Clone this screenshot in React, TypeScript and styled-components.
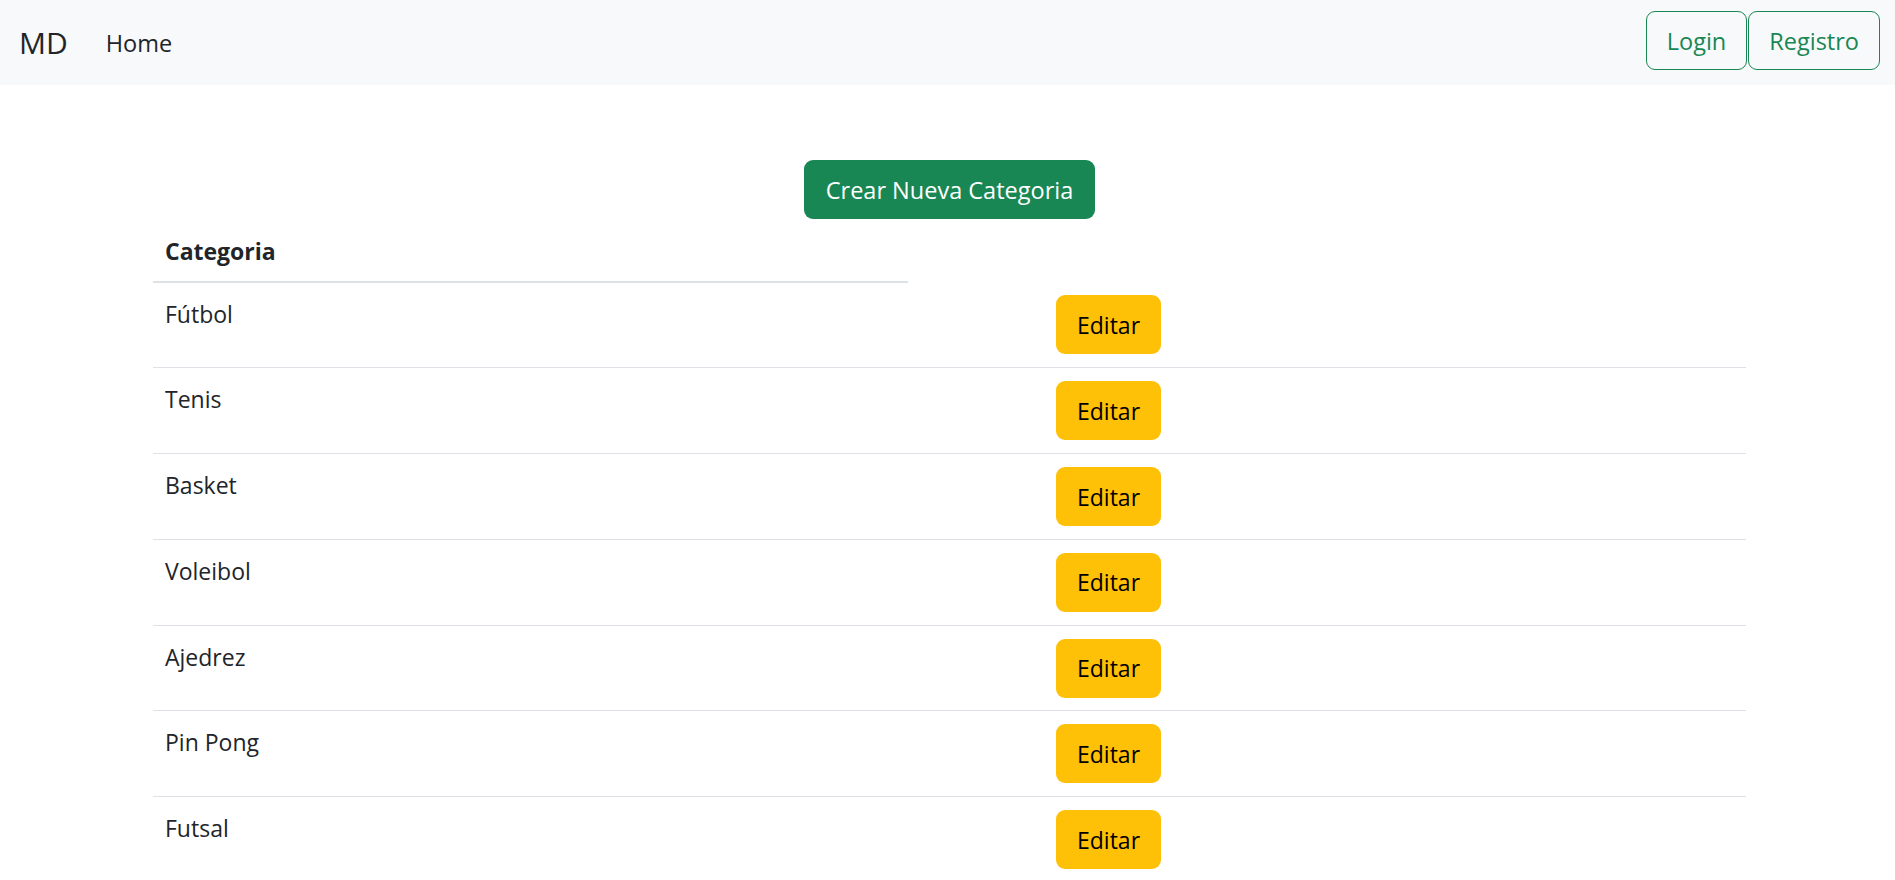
import React from 'react';
import styled, { createGlobalStyle } from 'styled-components';

const GlobalStyle = createGlobalStyle`
  body {
    margin: 0;
    font-family: "Segoe UI", "Open Sans", "Noto Sans", sans-serif;
    color: #212529;
    background: #fff;
  }
`;

const categorias = ['Fútbol', 'Tenis', 'Basket', 'Voleibol', 'Ajedrez', 'Pin Pong', 'Futsal'];

const App = () => {
  return (
    <>
      <GlobalStyle />
      <NavBar>
        <Brand>MD</Brand>
        <NavLink>Home</NavLink>
        <NavActions>
          <OutlineButton>Login</OutlineButton>
          <OutlineButton>Registro</OutlineButton>
        </NavActions>
      </NavBar>
      <Main>
        <CreateButton>Crear Nueva Categoria</CreateButton>
        <Table>
          <colgroup>
            <col style={{ width: 755 }} />
            <col style={{ width: 838 }} />
          </colgroup>
          <thead>
            <tr>
              <Th>Categoria</Th>
            </tr>
          </thead>
          <tbody>
            {categorias.map((nombre) => (
              <Row key={nombre}>
                <NameCell>{nombre}</NameCell>
                <ActionCell>
                  <EditButton>Editar</EditButton>
                </ActionCell>
              </Row>
            ))}
          </tbody>
        </Table>
      </Main>
    </>
  );
};

export default App;

const NavBar = styled.nav`
  height: 85px;
  background: #f8f9fa;
  display: flex;
  align-items: center;
  padding: 0 15px 0 19px;
  box-sizing: border-box;
`;

const Brand = styled.span`
  font-size: 30px;
  line-height: 45px;
  color: #212529;
  margin-right: 38px;
`;

const NavLink = styled.span`
  font-size: 23.5px;
  line-height: 36px;
  color: #212529;
`;

const NavActions = styled.div`
  margin-left: auto;
  align-self: flex-start;
  margin-top: 11px;
  display: flex;
  column-gap: 1px;
`;

const OutlineButton = styled.button`
  height: 59px;
  padding: 0 20px;
  border: 1.5px solid #198754;
  border-radius: 9px;
  background: transparent;
  color: #198754;
  font-family: inherit;
  font-size: 23.5px;
  line-height: 36px;
`;

const Main = styled.main`
  display: flex;
  flex-direction: column;
  align-items: center;
  padding-top: 75px;
  padding-left: 4px;
`;

const CreateButton = styled.button`
  height: 59px;
  padding: 0 22px;
  border: none;
  border-radius: 9px;
  background: #198754;
  color: #fff;
  font-family: inherit;
  font-size: 23.5px;
  line-height: 36px;
  margin-bottom: 2px;
`;

const Table = styled.table`
  width: 1593px;
  table-layout: fixed;
  border-collapse: collapse;
  font-size: 23px;
  line-height: 36px;
  vertical-align: top;
`;

const Th = styled.th`
  text-align: left;
  font-weight: 700;
  padding: 12px;
  border-bottom: 2px solid #dee2e6;
`;

const Row = styled.tr`
  height: 85.8px;
  border-bottom: 1px solid #dee2e6;
`;

const NameCell = styled.td`
  padding: 13px 12px 0;
  vertical-align: top;
`;

const ActionCell = styled.td`
  padding: 13px 12px 0 148px;
  vertical-align: top;
`;

const EditButton = styled.button`
  height: 59px;
  padding: 0 21px;
  border: none;
  border-radius: 9px;
  background: #ffc107;
  color: #000;
  font-family: inherit;
  font-size: 23px;
  line-height: 36px;
`;
